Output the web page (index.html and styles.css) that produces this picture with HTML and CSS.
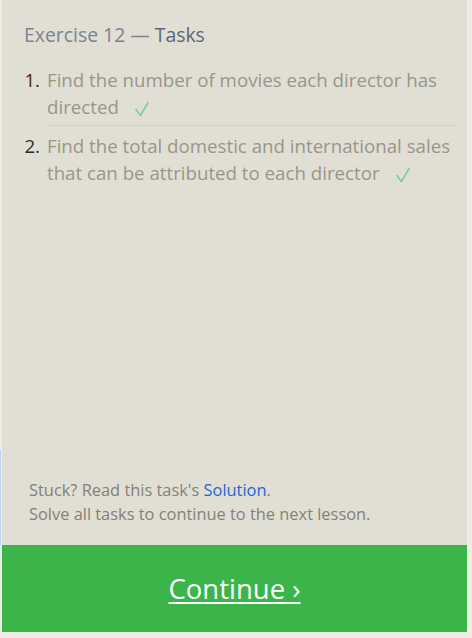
FILE: index.html
```html
<!DOCTYPE html>
<html>
<head>
<meta charset="utf-8">
<link rel="stylesheet" href="styles.css">
</head>
<body>
<div class="panel">
  <div class="content">
    <h2 class="title">Exercise 12 — <span class="strong">Tasks</span></h2>
    <ol class="tasks">
      <li class="task done"><span class="num n1">1.</span><span class="text">Find the number of movies each director has directed<svg class="check" width="14" height="16" viewBox="0 0 14 16"><path d="M1 8.5 L5.5 14.5 L13 1.5" fill="none" stroke="#7fcf8c" stroke-width="1.6" stroke-linecap="round" stroke-linejoin="round"/></svg></span></li>
      <li class="task done"><span class="num">2.</span><span class="text">Find the total domestic and international sales that can be attributed to each director<svg class="check" width="14" height="16" viewBox="0 0 14 16"><path d="M1 8.5 L5.5 14.5 L13 1.5" fill="none" stroke="#7fcf8c" stroke-width="1.6" stroke-linecap="round" stroke-linejoin="round"/></svg></span></li>
    </ol>
  </div>
  <div class="footer">
    <p>Stuck? Read this task's <a class="link" href="#">Solution</a>.</p>
    <p>Solve all tasks to continue to the next lesson.</p>
  </div>
  <div class="continue"><a href="#">Continue ›</a></div>
</div>
<div class="edge"></div>
</body>
</html>
```
FILE: styles.css
```css
html, body {
  margin: 0;
  padding: 0;
}
body {
  background: #efece4;
  width: 472px;
  height: 638px;
  position: relative;
  font-family: "Open Sans", "Noto Sans", sans-serif;
}
.panel {
  margin-left: 2px;
  width: 465px;
  height: 632px;
  background: #e1dfd4;
  display: flex;
  flex-direction: column;
}
.content {
  flex: 1;
  padding: 22px 10px 0 22px;
}
.title {
  margin: 0;
  font-weight: 400;
  font-size: 19.4px;
  line-height: 26px;
  color: #7a8393;
}
.title .strong {
  color: #5a6577;
}
.tasks {
  list-style: none;
  margin: 15px 0 0 0;
  padding: 0;
}
.task {
  display: flex;
  font-size: 18.7px;
  line-height: 27px;
  color: #9a958b;
  padding: 3px 0 5px 0;
}
.task + .task {
  border-top: 1px solid #d4d1c6;
  margin-left: 23px;
  padding-top: 6px;
}
.task + .task .num {
  margin-left: -23px;
}
.num {
  width: 23px;
  box-sizing: border-box;
  padding-right: 7px;
  color: #2b2b33;
  flex: none;
  text-align: right;
}
.num.n1 {
  color: #4a1e16;
}
.text {
  flex: 1;
}
.check {
  margin-left: 16px;
  vertical-align: -3px;
}
.footer {
  padding: 0 20px 19px 27px;
  font-size: 16.4px;
  line-height: 24px;
  color: #857f77;
}
.footer p {
  margin: 0;
}
.link {
  color: #1a66d4;
  text-decoration: none;
}
.continue {
  height: 87px;
  background: #3bb54a;
  display: flex;
  align-items: center;
  justify-content: center;
}
.continue a {
  color: #ffffff;
  font-size: 27.5px;
  text-decoration: underline;
  text-underline-offset: 3px;
  text-decoration-thickness: 2px;
}
.edge {
  position: absolute;
  left: 0;
  top: 450px;
  width: 1px;
  height: 95px;
  background: #b9d4f4;
}
```
